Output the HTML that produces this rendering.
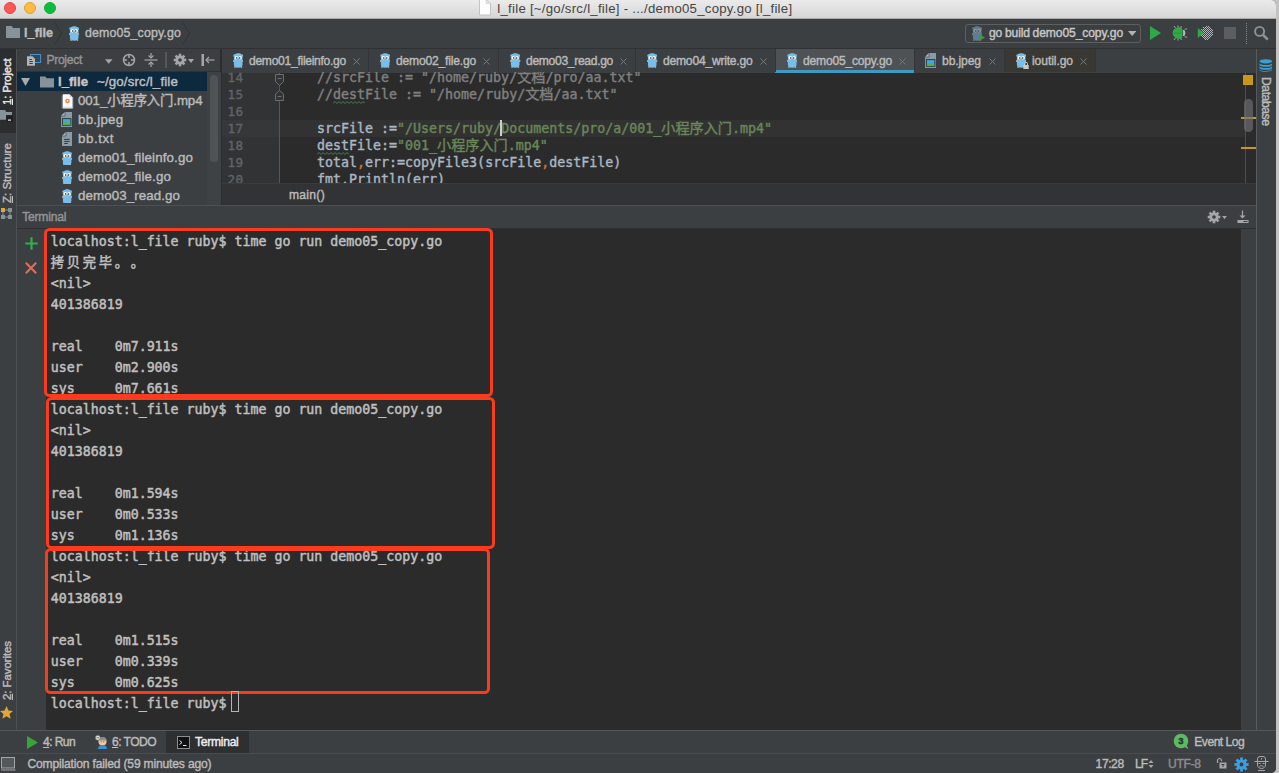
<!DOCTYPE html>
<html lang="zh">
<head>
<meta charset="utf-8">
<title>l_file - demo05_copy.go</title>
<style>
*{box-sizing:border-box;margin:0;padding:0}
html,body{width:1279px;height:773px;overflow:hidden;background:#c2c2c2}
body{font-family:"Liberation Sans","Noto Sans CJK SC",sans-serif;font-size:13px;color:#bbbbbb;position:relative}
.abs{position:absolute}
#win{position:absolute;left:0;top:0;width:1276px;height:773px;background:#3c3f41;border-radius:0 5px 5px 0;overflow:hidden}
.t{position:absolute;white-space:pre;line-height:16px;-webkit-text-stroke:0.4px currentColor}
.mono{font-family:"DejaVu Sans Mono","Liberation Mono","Noto Sans CJK SC",monospace}
.hl{position:absolute;height:1px}
.vl{position:absolute;width:1px}
.tl{position:absolute;top:2px;width:12px;height:12px;border-radius:50%}
u{text-decoration:underline;text-underline-offset:1px;text-decoration-thickness:1px}
</style>
</head>
<body>
<div id="win">
<!-- TITLE BAR -->
<div class="abs" style="left:0;top:0;width:1276px;height:19px;background:linear-gradient(#ebebeb,#d6d6d6);border-bottom:1px solid #a9a9a9"></div>
<div class="tl" style="left:4px;background:#fc5753;border:0.5px solid #df4744"></div>
<div class="tl" style="left:24px;background:#fdbc40;border:0.5px solid #de9f34"></div>
<div class="tl" style="left:44px;background:#0bbd3f;border:0.5px solid #1aab29"></div>
<svg class="abs" style="left:479px;top:0" width="12" height="16" viewBox="0 0 12 16"><path d="M0.500 -1h6.500l4.500 4.500v11.500h-11z" fill="#fefefe" stroke="#b9b9b9" stroke-width="0.800"/><path d="M7 -1v4.500h4.500z" fill="#e4e4e4" stroke="#c4c4c4" stroke-width="0.500"/></svg>
<div class="t" style="left:497.3px;top:0.5px;font-size:13.2px;color:#444444;line-height:16px;letter-spacing:0.262px;-webkit-text-stroke:0;">l_file [~/go/src/l_file] - .../demo05_copy.go [l_file]</div>
<!-- NAV BAR -->
<svg class="abs" style="left:6px;top:26px" width="15" height="12" viewBox="0 0 15 12"><path d="M0 0h5.6l1.6 2H14v10H0z" fill="#87939a"/></svg>
<div class="t" style="left:24px;top:25px;font-size:12.6px;color:#bbbbbb;line-height:16px;font-weight:bold;letter-spacing:0.083px;">l_file</div><svg class="abs" style="left:54px;top:22px" width="9" height="23" viewBox="0 0 9 23"><path d="M0.5 0.5L7.5 11.5L0.5 22.5" fill="none" stroke="#2e3032" stroke-width="0.8"/></svg>
<svg class="abs" style="left:68.800px;top:26px" width="10.400" height="15" viewBox="0 0 10.400 15"><g><circle cx="1.700" cy="2.700" r="1.400" fill="#77beea"/><circle cx="8.700" cy="2.700" r="1.400" fill="#77beea"/><ellipse cx="0.700" cy="8" rx="0.750" ry="0.900" fill="#e0b48e"/><ellipse cx="9.700" cy="8" rx="0.750" ry="0.900" fill="#e0b48e"/><ellipse cx="2" cy="14.100" rx="0.900" ry="0.800" fill="#e0b48e"/><ellipse cx="8.400" cy="14.100" rx="0.900" ry="0.800" fill="#e0b48e"/><path d="M0.900 5C0.900 1.600 2.800 0.300 5.200 0.300S9.500 1.600 9.500 5V11.500C9.500 13.900 7.700 14.700 5.200 14.700S0.900 13.900 0.900 11.500z" fill="#77beea"/><circle cx="3.300" cy="4.800" r="1.750" fill="#fff"/><circle cx="7.100" cy="4.800" r="1.750" fill="#fff"/><circle cx="3.700" cy="5" r="0.800" fill="#1d1d1d"/><circle cx="6.700" cy="5" r="0.800" fill="#1d1d1d"/><ellipse cx="5.200" cy="6.400" rx="0.900" ry="0.600" fill="#d9b595"/><ellipse cx="5.200" cy="6" rx="0.550" ry="0.350" fill="#3a2f2a"/></g></svg>
<div class="t" style="left:85px;top:25px;font-size:12.4px;color:#bbbbbb;line-height:16px;letter-spacing:0.132px;">demo05_copy.go</div><svg class="abs" style="left:182px;top:22px" width="9" height="23" viewBox="0 0 9 23"><path d="M0.5 0.5L7.5 11.5L0.5 22.5" fill="none" stroke="#2e3032" stroke-width="0.8"/></svg>
<div class="abs" style="left:965px;top:24px;width:176px;height:19px;border:1px solid #5e6060;border-radius:3px;background:#3c3f41"></div>
<svg class="abs" style="left:972px;top:26px;opacity:.5" width="10.400" height="15" viewBox="0 0 10.400 15"><g><circle cx="1.700" cy="2.700" r="1.400" fill="#77beea"/><circle cx="8.700" cy="2.700" r="1.400" fill="#77beea"/><ellipse cx="0.700" cy="8" rx="0.750" ry="0.900" fill="#e0b48e"/><ellipse cx="9.700" cy="8" rx="0.750" ry="0.900" fill="#e0b48e"/><ellipse cx="2" cy="14.100" rx="0.900" ry="0.800" fill="#e0b48e"/><ellipse cx="8.400" cy="14.100" rx="0.900" ry="0.800" fill="#e0b48e"/><path d="M0.900 5C0.900 1.600 2.800 0.300 5.200 0.300S9.500 1.600 9.500 5V11.500C9.500 13.900 7.700 14.700 5.200 14.700S0.900 13.900 0.900 11.500z" fill="#77beea"/><circle cx="3.300" cy="4.800" r="1.750" fill="#fff"/><circle cx="7.100" cy="4.800" r="1.750" fill="#fff"/><circle cx="3.700" cy="5" r="0.800" fill="#1d1d1d"/><circle cx="6.700" cy="5" r="0.800" fill="#1d1d1d"/><ellipse cx="5.200" cy="6.400" rx="0.900" ry="0.600" fill="#d9b595"/><ellipse cx="5.200" cy="6" rx="0.550" ry="0.350" fill="#3a2f2a"/></g></svg>
<svg class="abs" style="left:979px;top:34px" width="6" height="7" viewBox="0 0 6 7"><path d="M0 0L6 3.5L0 7z" fill="#3a9a3e"/></svg>
<div class="t" style="left:989px;top:24.9px;font-size:12.1px;color:#c8c8c8;line-height:16px;letter-spacing:-0.105px;word-spacing:-0.6px;">go build demo05_copy.go</div><svg class="abs" style="left:1127.500px;top:31.300px" width="8.400" height="5" viewBox="0 0 10 6"><path d="M0 0h10L5 6z" fill="#b4b4b4"/></svg>
<svg class="abs" style="left:1149.800px;top:26px" width="11" height="14" viewBox="0 0 11 14"><path d="M0 0L11 7L0 14z" fill="#2fa947"/></svg>
<svg class="abs" style="left:1170px;top:25px" width="18" height="16" viewBox="0 0 18 16">
  <g stroke="#a4a7a9" stroke-width="1" fill="none"><path d="M4 1l1.500 2M8 0.500v2.500M11.500 1l-1 2M4 15l1.500-2M8 15.500v-2.500M11.500 15l-1-2"/><path d="M14 5.500c1-1.500 2-1.800 3.200-1.800M14 10.500c1 1.500 2 1.800 3.200 1.800"/></g>
  <ellipse cx="13" cy="8" rx="2.300" ry="3" fill="#b9bcbe"/>
  <path d="M12.500 3.500A5.500 5.500 0 1 0 12.500 12.500A7 7 0 0 1 12.500 3.500z" fill="#2fa947"/>
  <circle cx="8" cy="8" r="5.400" fill="#2fa947"/>
  <path d="M13.200 4.200A6.500 6.500 0 0 0 13.200 11.800A9 9 0 0 1 13.200 4.200z" fill="#3c3f41"/>
  <path d="M2.800 8h8" stroke="#278f3c" stroke-width="0.800"/>
</svg>
<svg class="abs" style="left:1197px;top:25px" width="17" height="16" viewBox="0 0 17 16">
  <path d="M9 1.5H12M6 2.5H13M7 3.5H14M4 4.5H15M5 5.5H16M4 6.5H16M5 7.5H16M4 8.5H16M5 9.5H16M4 10.5H16M5 11.5H15M6 12.5H14M7 13.5H13M8 14.5H12" fill="none" stroke="#b4b7b9" stroke-width="1" stroke-dasharray="1 1"/>
  <path d="M0.800 3L6.800 8L0.800 13z" fill="#2fa947"/>
</svg>
<div class="abs" style="left:1224px;top:27px;width:12px;height:12px;background:#5b5d5e"></div>
<div class="abs" style="left:1246px;top:23px;width:1px;height:22px;background:repeating-linear-gradient(#85888a 0 1px,transparent 1px 2px)"></div>
<svg class="abs" style="left:1253px;top:25px" width="17" height="17" viewBox="0 0 17 17"><circle cx="6.600" cy="6.400" r="4.500" fill="none" stroke="#909294" stroke-width="1.900"/><path d="M10 9.800l4.800 4.800" stroke="#909294" stroke-width="2.600"/></svg>
<div class="hl" style="left:0;top:48px;width:1276px;background:#2f3133"></div>
<!-- LEFT STRIP -->
<div class="abs" style="left:0;top:49px;width:16px;height:682px;background:#3c3f41"></div>
<div class="abs" style="left:0;top:49px;width:16px;height:83.500px;background:#2b2d2e"></div>
<div class="vl" style="left:16px;top:49px;height:682px;background:#4d5052"></div>
<div class="abs" style="left:-1.3px;top:105px;width:46.5px;height:16px;transform-origin:0 0;transform:rotate(-90deg)"><div class="t" style="left:0px;top:0px;font-size:11.5px;color:#e6e6e6;line-height:16px;letter-spacing:-0.208px;"><u>1</u>: Project</div></div>
<svg class="abs" style="left:0;top:109px" width="14" height="14" viewBox="0 0 14 14"><path d="M0 1h5l1.200 2h5.800v3h-6v4.700h-6z" fill="#87939a"/><rect x="6.500" y="6.500" width="6.500" height="6.500" fill="#1f2021"/><rect x="8" y="10.500" width="3" height="1.200" fill="#f0f0f0"/></svg>
<div class="abs" style="left:-1.3px;top:203px;width:60px;height:16px;transform-origin:0 0;transform:rotate(-90deg)"><div class="t" style="left:0px;top:0px;font-size:11.5px;color:#bbbbbb;line-height:16px;letter-spacing:-0.007px;"><u>Z</u>: Structure</div></div>
<svg class="abs" style="left:1px;top:208px" width="12" height="12" viewBox="0 0 12 12"><rect x="0" y="0" width="4" height="4" fill="#e2a53a"/><rect x="0" y="7" width="4" height="4" fill="#87939a"/><rect x="7" y="0" width="4" height="4" fill="#87939a"/><rect x="7" y="7" width="4" height="4" fill="#87939a"/><path d="M4 2h3M2 4v3M9 4v3M4 9h3" stroke="#87939a" stroke-width="1"/></svg>
<div class="abs" style="left:-1.3px;top:700px;width:59px;height:16px;transform-origin:0 0;transform:rotate(-90deg)"><div class="t" style="left:0px;top:0px;font-size:11.5px;color:#bbbbbb;line-height:16px;letter-spacing:-0.090px;"><u>2</u>: Favorites</div></div>
<svg class="abs" style="left:0;top:705.500px" width="13" height="13" viewBox="0 0 12 12"><path d="M6 0l1.8 4.1 4.2.4-3.2 2.9 1 4.3L6 9.4 2.200 11.700l1-4.300L0 4.500l4.200-.4z" fill="#e2a53a"/></svg>
<!-- PROJECT PANEL -->
<div class="abs" style="left:17px;top:49px;width:204px;height:22px;background:#3c3f41"></div>
<div class="hl" style="left:17px;top:71px;width:204px;background:#2f3133"></div>
<div class="vl" style="left:220px;top:49px;height:157px;background:#2b2d2e;width:2px"></div>
<svg class="abs" style="left:27px;top:53px" width="15" height="14" viewBox="0 0 15 14">
  <rect x="3.600" y="1.500" width="10" height="8" fill="#31495c" stroke="#4a94cc" stroke-width="1"/>
  <path d="M0 3.300h5.500l2.500 2.500v7h-8z" fill="#b3b5b7"/><path d="M2.300 6.500h2.500M2.300 8.500h3.500M2.300 10.500h3.500" stroke="#3c3f41" stroke-width="1"/>
</svg>
<div class="t" style="left:46.4px;top:52px;font-size:12.1px;color:#939597;line-height:16px;letter-spacing:-0.292px;">Project</div><svg class="abs" style="left:105px;top:58.500px" width="7.500" height="5" viewBox="0 0 8 5"><path d="M0 0h8L4 5z" fill="#a4a6a8"/></svg>
<svg class="abs" style="left:122px;top:53px" width="14" height="14" viewBox="0 0 14 14"><circle cx="7" cy="7" r="5.500" fill="none" stroke="#a4a6a8" stroke-width="1.500"/><path d="M7 1.500v3.500M7 9v3.500M1.500 7h3.500M9 7h3.500" stroke="#a4a6a8" stroke-width="1.500"/></svg>
<svg class="abs" style="left:144px;top:53px" width="14" height="14" viewBox="0 0 14 14"><path d="M0.500 7h13" stroke="#a4a6a8" stroke-width="1.200"/><path d="M7 0v4.500M7 14v-4.500" stroke="#a4a6a8" stroke-width="1.200"/><path d="M4.500 2.500L7 5l2.500-2.500M4.500 11.500L7 9l2.500 2.500" fill="none" stroke="#a4a6a8" stroke-width="1.100"/></svg>
<div class="abs" style="left:165px;top:52px;width:2px;height:16px;background:#55585a"></div>
<svg class="abs" style="left:173px;top:53px" width="14" height="14" viewBox="-7 -7 14 14"><g><g fill="#a4a6a8"><rect x="-1.3" y="-6.3" width="2.6" height="12.6"/><rect x="-1.3" y="-6.3" width="2.6" height="12.6" transform="rotate(45)"/><rect x="-1.3" y="-6.3" width="2.6" height="12.6" transform="rotate(90)"/><rect x="-1.3" y="-6.3" width="2.6" height="12.6" transform="rotate(135)"/><circle r="4.5"/></g></g><circle r="1.800" fill="#3c3f41"/></svg>
<svg class="abs" style="left:188px;top:59px" width="6" height="4" viewBox="0 0 6 4"><path d="M0 0h6L3 4z" fill="#a4a6a8"/></svg>
<svg class="abs" style="left:201px;top:54px" width="14" height="12" viewBox="0 0 14 12"><rect x="0.500" y="0" width="2.500" height="12" fill="#a4a6a8"/><path d="M5 6h8.500" stroke="#a4a6a8" stroke-width="1.200"/><path d="M8 3L5 6l3 3" fill="none" stroke="#a4a6a8" stroke-width="1.200"/></svg>
<div class="abs" style="left:17px;top:72px;width:190px;height:19px;background:#0d293e"></div>
<svg class="abs" style="left:20.500px;top:76.500px" width="9.500" height="9.500" viewBox="0 0 10 10"><path d="M0 1h9.500L4.750 9.500z" fill="#a9abad"/></svg>
<svg class="abs" style="left:40px;top:75.500px" width="14" height="12" viewBox="0 0 15 12"><path d="M0 0h5.600l1.600 2H15v10H0z" fill="#87939a"/></svg>
<div class="t" style="left:58px;top:73.5px;font-size:13.2px;color:#c8c8c8;line-height:16px;font-weight:bold;letter-spacing:-0.010px;">l_file</div><div class="t" style="left:97px;top:73.5px;font-size:13.3px;color:#c0c0c0;line-height:16px;letter-spacing:0.152px;">~/go/src/l_file</div><svg class="abs" style="left:61px;top:93.7px" width="13" height="15" viewBox="0 0 13 15"><path d="M0.500 1.500h1.500v13h-1.500zM11 3.500h1.500v11h-1.500z" fill="#6d7173"/><path d="M1.800 0.300h6.700l3 3v11.200h-9.700z" fill="#fbfbfb"/><path d="M8.500 0.300v3h3z" fill="#d4d4d4"/><circle cx="6.500" cy="7" r="2.300" fill="#e98b3f"/><circle cx="6.500" cy="6.800" r="0.900" fill="#fde6cf"/><path d="M5.600 8.500l0.900 1 0.900-1z" fill="#e98b3f"/><path d="M1.800 13.200h9.700" stroke="#d0d0d0" stroke-width="0.800"/></svg>
<div class="t" style="left:78px;top:92.5px;font-size:13.3px;color:#bbbbbb;line-height:16px;letter-spacing:-0.088px;">001_小程序入门.mp4</div>
<svg class="abs" style="left:61px;top:112.1px" width="11" height="15" viewBox="0 0 11 15"><path d="M4 0h7v15h-11v-11z" fill="#8a9ba6"/><path d="M0 4h4v-4z" fill="#a9b5bd"/><path d="M0 4h4v-4" fill="none" stroke="#3c3f41" stroke-width="0.600"/><rect x="1.400" y="6.600" width="8.500" height="6.700" fill="#40a8de" stroke="#2c3b45" stroke-width="1"/><path d="M1.900 12.800v-1.600l2.400-1.700 2 1 1.400-.6 1.700 1.500v1.400z" fill="#5cb04a"/></svg>
<div class="t" style="left:78px;top:111.5px;font-size:13.3px;color:#bbbbbb;line-height:16px;letter-spacing:0.239px;">bb.jpeg</div>
<svg class="abs" style="left:62px;top:131.7px" width="10" height="14" viewBox="0 0 10 14"><path d="M4 0h6v14h-10v-10z" fill="#8a9ba6"/><path d="M0 4h4v-4z" fill="#a9b5bd"/><path d="M0 4h4v-4" fill="none" stroke="#3c3f41" stroke-width="0.600"/><path d="M2.200 7.400h5.500M2.200 9.400h5.500M2.200 11.500h3.600" stroke="#33393d" stroke-width="1"/></svg>
<div class="t" style="left:78px;top:130.5px;font-size:13.3px;color:#bbbbbb;line-height:16px;letter-spacing:0.578px;">bb.txt</div>
<svg class="abs" style="left:61.900px;top:150.5px" width="10.300" height="14.800" viewBox="0 0 10.400 15"><g><circle cx="1.700" cy="2.700" r="1.400" fill="#77beea"/><circle cx="8.700" cy="2.700" r="1.400" fill="#77beea"/><ellipse cx="0.700" cy="8" rx="0.750" ry="0.900" fill="#e0b48e"/><ellipse cx="9.700" cy="8" rx="0.750" ry="0.900" fill="#e0b48e"/><ellipse cx="2" cy="14.100" rx="0.900" ry="0.800" fill="#e0b48e"/><ellipse cx="8.400" cy="14.100" rx="0.900" ry="0.800" fill="#e0b48e"/><path d="M0.900 5C0.900 1.600 2.800 0.300 5.200 0.300S9.500 1.600 9.500 5V11.500C9.500 13.900 7.700 14.700 5.200 14.700S0.900 13.900 0.900 11.500z" fill="#77beea"/><circle cx="3.300" cy="4.800" r="1.750" fill="#fff"/><circle cx="7.100" cy="4.800" r="1.750" fill="#fff"/><circle cx="3.700" cy="5" r="0.800" fill="#1d1d1d"/><circle cx="6.700" cy="5" r="0.800" fill="#1d1d1d"/><ellipse cx="5.200" cy="6.400" rx="0.900" ry="0.600" fill="#d9b595"/><ellipse cx="5.200" cy="6" rx="0.550" ry="0.350" fill="#3a2f2a"/></g></svg>
<div class="t" style="left:78px;top:149.5px;font-size:13.3px;color:#bbbbbb;line-height:16px;letter-spacing:0.146px;">demo01_fileinfo.go</div>
<svg class="abs" style="left:61.900px;top:169.5px" width="10.300" height="14.800" viewBox="0 0 10.400 15"><g><circle cx="1.700" cy="2.700" r="1.400" fill="#77beea"/><circle cx="8.700" cy="2.700" r="1.400" fill="#77beea"/><ellipse cx="0.700" cy="8" rx="0.750" ry="0.900" fill="#e0b48e"/><ellipse cx="9.700" cy="8" rx="0.750" ry="0.900" fill="#e0b48e"/><ellipse cx="2" cy="14.100" rx="0.900" ry="0.800" fill="#e0b48e"/><ellipse cx="8.400" cy="14.100" rx="0.900" ry="0.800" fill="#e0b48e"/><path d="M0.900 5C0.900 1.600 2.800 0.300 5.200 0.300S9.500 1.600 9.500 5V11.500C9.500 13.900 7.700 14.700 5.200 14.700S0.900 13.900 0.900 11.500z" fill="#77beea"/><circle cx="3.300" cy="4.800" r="1.750" fill="#fff"/><circle cx="7.100" cy="4.800" r="1.750" fill="#fff"/><circle cx="3.700" cy="5" r="0.800" fill="#1d1d1d"/><circle cx="6.700" cy="5" r="0.800" fill="#1d1d1d"/><ellipse cx="5.200" cy="6.400" rx="0.900" ry="0.600" fill="#d9b595"/><ellipse cx="5.200" cy="6" rx="0.550" ry="0.350" fill="#3a2f2a"/></g></svg>
<div class="t" style="left:78px;top:168.5px;font-size:13.3px;color:#bbbbbb;line-height:16px;letter-spacing:0.147px;">demo02_file.go</div>
<svg class="abs" style="left:61.900px;top:188.5px" width="10.300" height="14.800" viewBox="0 0 10.400 15"><g><circle cx="1.700" cy="2.700" r="1.400" fill="#77beea"/><circle cx="8.700" cy="2.700" r="1.400" fill="#77beea"/><ellipse cx="0.700" cy="8" rx="0.750" ry="0.900" fill="#e0b48e"/><ellipse cx="9.700" cy="8" rx="0.750" ry="0.900" fill="#e0b48e"/><ellipse cx="2" cy="14.100" rx="0.900" ry="0.800" fill="#e0b48e"/><ellipse cx="8.400" cy="14.100" rx="0.900" ry="0.800" fill="#e0b48e"/><path d="M0.900 5C0.900 1.600 2.800 0.300 5.200 0.300S9.500 1.600 9.500 5V11.500C9.500 13.900 7.700 14.700 5.200 14.700S0.900 13.900 0.900 11.500z" fill="#77beea"/><circle cx="3.300" cy="4.800" r="1.750" fill="#fff"/><circle cx="7.100" cy="4.800" r="1.750" fill="#fff"/><circle cx="3.700" cy="5" r="0.800" fill="#1d1d1d"/><circle cx="6.700" cy="5" r="0.800" fill="#1d1d1d"/><ellipse cx="5.200" cy="6.400" rx="0.900" ry="0.600" fill="#d9b595"/><ellipse cx="5.200" cy="6" rx="0.550" ry="0.350" fill="#3a2f2a"/></g></svg>
<div class="t" style="left:78px;top:187.5px;font-size:13.3px;color:#bbbbbb;line-height:16px;letter-spacing:0.104px;">demo03_read.go</div>
<div class="abs" style="left:207px;top:72px;width:13.500px;height:133px;background:#3f4244"></div>
<div class="abs" style="left:210px;top:75px;width:8px;height:87px;border-radius:4px;background:#505354"></div>
<div class="abs" style="left:17px;top:205px;width:1239px;height:1px;background:#4e5153"></div>
<!-- EDITOR TABS -->
<div class="abs" style="left:222px;top:49px;width:1034px;height:24px;background:#3c3f41"></div>
<div class="abs" style="left:775px;top:49px;width:139px;height:23px;background:#4e5254"></div>
<div class="abs" style="left:775px;top:69.500px;width:139px;height:3px;background:#3d9bc3"></div>
<div class="abs" style="left:1005px;top:49px;width:90px;height:23px;background:#3a3832"></div>
<div class="vl" style="left:368px;top:49px;height:23px;background:#323537"></div>
<div class="vl" style="left:498px;top:49px;height:23px;background:#323537"></div>
<div class="vl" style="left:635px;top:49px;height:23px;background:#323537"></div>
<div class="vl" style="left:775px;top:49px;height:23px;background:#323537"></div>
<div class="vl" style="left:914px;top:49px;height:23px;background:#323537"></div>
<div class="vl" style="left:1004px;top:49px;height:23px;background:#323537"></div>
<div class="vl" style="left:1095px;top:49px;height:23px;background:#323537"></div>
<svg class="abs" style="left:232.7px;top:53.400px" width="10.400" height="15" viewBox="0 0 10.400 15"><g><circle cx="1.700" cy="2.700" r="1.400" fill="#77beea"/><circle cx="8.700" cy="2.700" r="1.400" fill="#77beea"/><ellipse cx="0.700" cy="8" rx="0.750" ry="0.900" fill="#e0b48e"/><ellipse cx="9.700" cy="8" rx="0.750" ry="0.900" fill="#e0b48e"/><ellipse cx="2" cy="14.100" rx="0.900" ry="0.800" fill="#e0b48e"/><ellipse cx="8.400" cy="14.100" rx="0.900" ry="0.800" fill="#e0b48e"/><path d="M0.900 5C0.900 1.600 2.800 0.300 5.200 0.300S9.500 1.600 9.500 5V11.500C9.500 13.900 7.700 14.700 5.200 14.700S0.900 13.900 0.900 11.500z" fill="#77beea"/><circle cx="3.300" cy="4.800" r="1.750" fill="#fff"/><circle cx="7.100" cy="4.800" r="1.750" fill="#fff"/><circle cx="3.700" cy="5" r="0.800" fill="#1d1d1d"/><circle cx="6.700" cy="5" r="0.800" fill="#1d1d1d"/><ellipse cx="5.200" cy="6.400" rx="0.900" ry="0.600" fill="#d9b595"/><ellipse cx="5.200" cy="6" rx="0.550" ry="0.350" fill="#3a2f2a"/></g></svg>
<div class="t" style="left:249px;top:53px;font-size:12.1px;color:#bbbbbb;line-height:16px;letter-spacing:-0.289px;">demo01_fileinfo.go</div><svg class="abs" style="left:353.2px;top:58px" width="7" height="7" viewBox="0 0 8 8"><g><path d="M0.5 0.5l7 7M7.5 0.5l-7 7" stroke="#787b7d" stroke-width="1.1" fill="none"/></g></svg>
<svg class="abs" style="left:379.6px;top:53.400px" width="10.400" height="15" viewBox="0 0 10.400 15"><g><circle cx="1.700" cy="2.700" r="1.400" fill="#77beea"/><circle cx="8.700" cy="2.700" r="1.400" fill="#77beea"/><ellipse cx="0.700" cy="8" rx="0.750" ry="0.900" fill="#e0b48e"/><ellipse cx="9.700" cy="8" rx="0.750" ry="0.900" fill="#e0b48e"/><ellipse cx="2" cy="14.100" rx="0.900" ry="0.800" fill="#e0b48e"/><ellipse cx="8.400" cy="14.100" rx="0.900" ry="0.800" fill="#e0b48e"/><path d="M0.900 5C0.900 1.600 2.800 0.300 5.200 0.300S9.500 1.600 9.500 5V11.500C9.500 13.900 7.700 14.700 5.200 14.700S0.900 13.900 0.900 11.500z" fill="#77beea"/><circle cx="3.300" cy="4.800" r="1.750" fill="#fff"/><circle cx="7.100" cy="4.800" r="1.750" fill="#fff"/><circle cx="3.700" cy="5" r="0.800" fill="#1d1d1d"/><circle cx="6.700" cy="5" r="0.800" fill="#1d1d1d"/><ellipse cx="5.200" cy="6.400" rx="0.900" ry="0.600" fill="#d9b595"/><ellipse cx="5.200" cy="6" rx="0.550" ry="0.350" fill="#3a2f2a"/></g></svg>
<div class="t" style="left:396px;top:53px;font-size:12.1px;color:#bbbbbb;line-height:16px;letter-spacing:-0.193px;">demo02_file.go</div><svg class="abs" style="left:483.2px;top:58px" width="7" height="7" viewBox="0 0 8 8"><g><path d="M0.5 0.5l7 7M7.5 0.5l-7 7" stroke="#787b7d" stroke-width="1.1" fill="none"/></g></svg>
<svg class="abs" style="left:510.2px;top:53.400px" width="10.400" height="15" viewBox="0 0 10.400 15"><g><circle cx="1.700" cy="2.700" r="1.400" fill="#77beea"/><circle cx="8.700" cy="2.700" r="1.400" fill="#77beea"/><ellipse cx="0.700" cy="8" rx="0.750" ry="0.900" fill="#e0b48e"/><ellipse cx="9.700" cy="8" rx="0.750" ry="0.900" fill="#e0b48e"/><ellipse cx="2" cy="14.100" rx="0.900" ry="0.800" fill="#e0b48e"/><ellipse cx="8.400" cy="14.100" rx="0.900" ry="0.800" fill="#e0b48e"/><path d="M0.900 5C0.900 1.600 2.800 0.300 5.200 0.300S9.500 1.600 9.500 5V11.500C9.500 13.900 7.700 14.700 5.200 14.700S0.900 13.900 0.900 11.500z" fill="#77beea"/><circle cx="3.300" cy="4.800" r="1.750" fill="#fff"/><circle cx="7.100" cy="4.800" r="1.750" fill="#fff"/><circle cx="3.700" cy="5" r="0.800" fill="#1d1d1d"/><circle cx="6.700" cy="5" r="0.800" fill="#1d1d1d"/><ellipse cx="5.200" cy="6.400" rx="0.900" ry="0.600" fill="#d9b595"/><ellipse cx="5.200" cy="6" rx="0.550" ry="0.350" fill="#3a2f2a"/></g></svg>
<div class="t" style="left:526px;top:53px;font-size:12.1px;color:#bbbbbb;line-height:16px;letter-spacing:-0.318px;">demo03_read.go</div><svg class="abs" style="left:619.7px;top:58px" width="7" height="7" viewBox="0 0 8 8"><g><path d="M0.5 0.5l7 7M7.5 0.5l-7 7" stroke="#787b7d" stroke-width="1.1" fill="none"/></g></svg>
<svg class="abs" style="left:647.2px;top:53.400px" width="10.400" height="15" viewBox="0 0 10.400 15"><g><circle cx="1.700" cy="2.700" r="1.400" fill="#77beea"/><circle cx="8.700" cy="2.700" r="1.400" fill="#77beea"/><ellipse cx="0.700" cy="8" rx="0.750" ry="0.900" fill="#e0b48e"/><ellipse cx="9.700" cy="8" rx="0.750" ry="0.900" fill="#e0b48e"/><ellipse cx="2" cy="14.100" rx="0.900" ry="0.800" fill="#e0b48e"/><ellipse cx="8.400" cy="14.100" rx="0.900" ry="0.800" fill="#e0b48e"/><path d="M0.900 5C0.900 1.600 2.800 0.300 5.200 0.300S9.500 1.600 9.500 5V11.500C9.500 13.900 7.700 14.700 5.200 14.700S0.900 13.900 0.900 11.500z" fill="#77beea"/><circle cx="3.300" cy="4.800" r="1.750" fill="#fff"/><circle cx="7.100" cy="4.800" r="1.750" fill="#fff"/><circle cx="3.700" cy="5" r="0.800" fill="#1d1d1d"/><circle cx="6.700" cy="5" r="0.800" fill="#1d1d1d"/><ellipse cx="5.200" cy="6.400" rx="0.900" ry="0.600" fill="#d9b595"/><ellipse cx="5.200" cy="6" rx="0.550" ry="0.350" fill="#3a2f2a"/></g></svg>
<div class="t" style="left:663px;top:53px;font-size:12.1px;color:#bbbbbb;line-height:16px;letter-spacing:-0.219px;">demo04_write.go</div><svg class="abs" style="left:759.7px;top:58px" width="7" height="7" viewBox="0 0 8 8"><g><path d="M0.5 0.5l7 7M7.5 0.5l-7 7" stroke="#787b7d" stroke-width="1.1" fill="none"/></g></svg>
<svg class="abs" style="left:787.1px;top:53.400px" width="10.400" height="15" viewBox="0 0 10.400 15"><g><circle cx="1.700" cy="2.700" r="1.400" fill="#77beea"/><circle cx="8.700" cy="2.700" r="1.400" fill="#77beea"/><ellipse cx="0.700" cy="8" rx="0.750" ry="0.900" fill="#e0b48e"/><ellipse cx="9.700" cy="8" rx="0.750" ry="0.900" fill="#e0b48e"/><ellipse cx="2" cy="14.100" rx="0.900" ry="0.800" fill="#e0b48e"/><ellipse cx="8.400" cy="14.100" rx="0.900" ry="0.800" fill="#e0b48e"/><path d="M0.900 5C0.900 1.600 2.800 0.300 5.200 0.300S9.500 1.600 9.500 5V11.500C9.500 13.900 7.700 14.700 5.200 14.700S0.900 13.900 0.900 11.500z" fill="#77beea"/><circle cx="3.300" cy="4.800" r="1.750" fill="#fff"/><circle cx="7.100" cy="4.800" r="1.750" fill="#fff"/><circle cx="3.700" cy="5" r="0.800" fill="#1d1d1d"/><circle cx="6.700" cy="5" r="0.800" fill="#1d1d1d"/><ellipse cx="5.200" cy="6.400" rx="0.900" ry="0.600" fill="#d9b595"/><ellipse cx="5.200" cy="6" rx="0.550" ry="0.350" fill="#3a2f2a"/></g></svg>
<div class="t" style="left:803px;top:53px;font-size:12.1px;color:#bbbbbb;line-height:16px;letter-spacing:-0.206px;">demo05_copy.go</div><svg class="abs" style="left:898.7px;top:58px" width="7" height="7" viewBox="0 0 8 8"><g><path d="M0.5 0.5l7 7M7.5 0.5l-7 7" stroke="#787b7d" stroke-width="1.1" fill="none"/></g></svg>
<svg class="abs" style="left:924.5px;top:52.900px" width="11" height="15" viewBox="0 0 11 15"><path d="M4 0h7v15h-11v-11z" fill="#8a9ba6"/><path d="M0 4h4v-4z" fill="#a9b5bd"/><path d="M0 4h4v-4" fill="none" stroke="#3c3f41" stroke-width="0.600"/><rect x="1.400" y="6.600" width="8.500" height="6.700" fill="#40a8de" stroke="#2c3b45" stroke-width="1"/><path d="M1.900 12.800v-1.600l2.400-1.700 2 1 1.400-.6 1.700 1.500v1.400z" fill="#5cb04a"/></svg>
<div class="t" style="left:942px;top:53px;font-size:12.1px;color:#bbbbbb;line-height:16px;letter-spacing:-0.098px;">bb.jpeg</div><svg class="abs" style="left:989.2px;top:58px" width="7" height="7" viewBox="0 0 8 8"><g><path d="M0.5 0.5l7 7M7.5 0.5l-7 7" stroke="#787b7d" stroke-width="1.1" fill="none"/></g></svg>
<svg class="abs" style="left:1015.7px;top:53.400px" width="10.400" height="15" viewBox="0 0 10.400 15"><g><circle cx="1.700" cy="2.700" r="1.400" fill="#77beea"/><circle cx="8.700" cy="2.700" r="1.400" fill="#77beea"/><ellipse cx="0.700" cy="8" rx="0.750" ry="0.900" fill="#e0b48e"/><ellipse cx="9.700" cy="8" rx="0.750" ry="0.900" fill="#e0b48e"/><ellipse cx="2" cy="14.100" rx="0.900" ry="0.800" fill="#e0b48e"/><ellipse cx="8.400" cy="14.100" rx="0.900" ry="0.800" fill="#e0b48e"/><path d="M0.900 5C0.900 1.600 2.800 0.300 5.200 0.300S9.500 1.600 9.500 5V11.500C9.500 13.900 7.700 14.700 5.200 14.700S0.900 13.900 0.900 11.500z" fill="#77beea"/><circle cx="3.300" cy="4.800" r="1.750" fill="#fff"/><circle cx="7.100" cy="4.800" r="1.750" fill="#fff"/><circle cx="3.700" cy="5" r="0.800" fill="#1d1d1d"/><circle cx="6.700" cy="5" r="0.800" fill="#1d1d1d"/><ellipse cx="5.200" cy="6.400" rx="0.900" ry="0.600" fill="#d9b595"/><ellipse cx="5.200" cy="6" rx="0.550" ry="0.350" fill="#3a2f2a"/></g></svg>
<svg class="abs" style="left:1022.7px;top:62px" width="6" height="7" viewBox="0 0 6 7"><path d="M1.500 3v-1.200a1.500 1.500 0 0 1 3 0V3" fill="none" stroke="#c9c9c9" stroke-width="1"/><rect x="0.300" y="3" width="5.400" height="4" fill="#c9c9c9"/></svg>
<div class="t" style="left:1032px;top:53px;font-size:12.1px;color:#bbbbbb;line-height:16px;letter-spacing:-0.076px;">ioutil.go</div><svg class="abs" style="left:1079.7px;top:58px" width="7" height="7" viewBox="0 0 8 8"><g><path d="M0.5 0.5l7 7M7.5 0.5l-7 7" stroke="#787b7d" stroke-width="1.1" fill="none"/></g></svg>
<!-- EDITOR -->
<div class="abs" id="editor" style="left:222px;top:72.500px;width:1034px;height:110.500px;background:#2b2b2b;overflow:hidden">
  <div class="abs" style="left:0;top:0;width:58px;height:111px;background:#313335"></div>
  <div class="abs" style="left:0;top:47.700px;width:58px;height:16.600px;background:#353739"></div>
  <div class="abs" style="left:58px;top:47.700px;width:966px;height:16.600px;background:#323232"></div>
  <div class="vl" style="left:57px;top:0;height:111px;background:#555759"></div>
  <svg class="abs" style="left:52px;top:0" width="11" height="30" viewBox="0 0 11 30">
    <path d="M1.500 1.500h8v7L5.500 12.500 1.500 8.500z" fill="#313335" stroke="#6b6e70" stroke-width="1"/><path d="M3.500 5.500h4" stroke="#6b6e70" stroke-width="1"/>
    <path d="M1.500 27.500h8v-6.500L5.500 17.500 1.500 21z" fill="#313335" stroke="#6b6e70" stroke-width="1"/><path d="M3.500 23.500h4" stroke="#6b6e70" stroke-width="1"/>
  </svg>
</div>
<div class="abs" style="left:222px;top:72px;width:1022px;height:111px;overflow:hidden">
<div class="t mono" style="left:5.5px;top:-2.8px;font-size:12.6px;line-height:17px;color:#606366;letter-spacing:0.4px">14</div><div class="t mono" style="left:95px;top:-2.8px;font-size:13.3px;line-height:17px"><span style="color:#808080">//srcFile := "/home/ruby/<span style="font-size:14.130px">文档</span>/pro/aa.txt"</span></div>
<div class="t mono" style="left:5.5px;top:14.2px;font-size:12.6px;line-height:17px;color:#606366;letter-spacing:0.4px">15</div><div class="t mono" style="left:95px;top:14.2px;font-size:13.3px;line-height:17px"><span style="color:#808080">//</span><span style="color:#808080">dest</span><span style="color:#808080">File := "/home/ruby/<span style="font-size:14.130px">文档</span>/aa.txt"</span></div>
<div class="t mono" style="left:5.5px;top:31.2px;font-size:12.6px;line-height:17px;color:#606366;letter-spacing:0.4px">16</div>
<div class="t mono" style="left:5.5px;top:48.2px;font-size:12.6px;line-height:17px;color:#606366;letter-spacing:0.4px">17</div><div class="t mono" style="left:95px;top:48.2px;font-size:13.3px;line-height:17px"><span style="color:#a9b7c6">srcFile :=</span><span style="color:#6a8759">"/Users/ruby/Documents/pro/a/001_<span style="font-size:14.130px">小程序入门</span>.mp4"</span></div>
<div class="t mono" style="left:5.5px;top:65.2px;font-size:12.6px;line-height:17px;color:#606366;letter-spacing:0.4px">18</div><div class="t mono" style="left:95px;top:65.2px;font-size:13.3px;line-height:17px"><span style="color:#a9b7c6">dest</span><span style="color:#a9b7c6">File:=</span><span style="color:#6a8759">"001_<span style="font-size:14.130px">小程序入门</span>.mp4"</span></div>
<div class="t mono" style="left:5.5px;top:82.2px;font-size:12.6px;line-height:17px;color:#606366;letter-spacing:0.4px">19</div><div class="t mono" style="left:95px;top:82.2px;font-size:13.3px;line-height:17px"><span style="color:#a9b7c6">total</span><span style="color:#cc7832">,</span><span style="color:#a9b7c6">err:=copyFile3(srcFile</span><span style="color:#cc7832">,</span><span style="color:#a9b7c6">destFile)</span></div>
<div class="t mono" style="left:5.5px;top:99.2px;font-size:12.6px;line-height:17px;color:#606366;letter-spacing:0.4px">20</div><div class="t mono" style="left:95px;top:99.2px;font-size:13.3px;line-height:17px"><span style="color:#a9b7c6">fmt.Println(err)</span></div>
<svg class="abs" style="left:111px;top:28.5px" width="32" height="3" viewBox="0 0 32 3"><polyline points="0,2.5 2,0.5 4,2.5 6,0.5 8,2.5 10,0.5 12,2.5 14,0.5 16,2.5 18,0.5 20,2.5 22,0.5 24,2.5 26,0.5 28,2.5 30,0.5 32,2.5" fill="none" stroke="#4f8a58" stroke-width="0.9"/></svg>
<svg class="abs" style="left:95px;top:79.5px" width="32" height="3" viewBox="0 0 32 3"><polyline points="0,2.5 2,0.5 4,2.5 6,0.5 8,2.5 10,0.5 12,2.5 14,0.5 16,2.5 18,0.5 20,2.5 22,0.5 24,2.5 26,0.5 28,2.5 30,0.5 32,2.5" fill="none" stroke="#4f8a58" stroke-width="0.9"/></svg>
<div class="abs" style="left:278.400px;top:48px;width:1.600px;height:16px;background:#cfcfcf"></div>
</div>
<div class="vl" style="left:1245px;top:72px;height:111px;background:#4d4f51"></div>
<div class="abs" style="left:1243px;top:75px;width:10px;height:10px;background:#c8981c"></div>
<div class="abs" style="left:1241px;top:117px;width:14.500px;height:2px;background:#c9971e"></div>
<div class="abs" style="left:1241px;top:147px;width:14.500px;height:2px;background:#c9971e"></div>
<div class="abs" style="left:1244px;top:98.500px;width:8.500px;height:33px;border-radius:4.250px;background:rgba(110,112,114,0.650)"></div>
<!-- breadcrumb -->
<div class="abs" style="left:222px;top:183px;width:1034px;height:22px;background:#313335"></div>
<div class="hl" style="left:222px;top:183px;width:1034px;background:#3a3c3e"></div>
<div class="t" style="left:289px;top:186.5px;font-size:12.1px;color:#bbbbbb;line-height:16px;letter-spacing:0.286px;">main()</div><!-- TERMINAL HEADER -->
<div class="abs" style="left:17px;top:206px;width:1239px;height:22px;background:#3c3f41"></div>
<div class="t" style="left:22.2px;top:209px;font-size:12.1px;color:#939597;line-height:16px;letter-spacing:-0.213px;">Terminal</div><svg class="abs" style="left:1207px;top:210px" width="14" height="14" viewBox="-7 -7 14 14"><g><g fill="#a4a6a8"><rect x="-1.3" y="-6.3" width="2.6" height="12.6"/><rect x="-1.3" y="-6.3" width="2.6" height="12.6" transform="rotate(45)"/><rect x="-1.3" y="-6.3" width="2.6" height="12.6" transform="rotate(90)"/><rect x="-1.3" y="-6.3" width="2.6" height="12.6" transform="rotate(135)"/><circle r="4.5"/></g></g><circle r="1.800" fill="#3c3f41"/></svg>
<svg class="abs" style="left:1222.200px;top:216px" width="5" height="3.200" viewBox="0 0 6 4"><path d="M0 0h6L3 4z" fill="#a4a6a8"/></svg>
<svg class="abs" style="left:1236.500px;top:210px" width="12" height="14" viewBox="0 0 12 14"><path d="M5.500 0.500v7" stroke="#a4a6a8" stroke-width="1.200"/><path d="M2.500 5.500L5.500 8.500l3-3z" fill="#a4a6a8"/><rect x="0.500" y="10" width="11" height="3" fill="#a4a6a8"/><rect x="6.500" y="11" width="4" height="1" fill="#3c3f41"/></svg>
<div class="hl" style="left:17px;top:228px;width:1239px;background:#2d2f30"></div>
<!-- TERMINAL BODY -->
<div class="abs" style="left:17px;top:229px;width:29px;height:502px;background:#3c3f41"></div>
<div class="abs" style="left:46px;top:229px;width:1195px;height:502px;background:#2b2b2b"></div>
<div class="abs" style="left:1241px;top:229px;width:15px;height:502px;background:#3c3f41"></div>
<svg class="abs" style="left:24.500px;top:236.500px" width="13" height="13" viewBox="0 0 13 13"><path d="M6.500 0.300v12.400M0.300 6.500h12.400" stroke="#30ae4b" stroke-width="2.200"/></svg>
<svg class="abs" style="left:25px;top:262px" width="12" height="12" viewBox="0 0 12 12"><path d="M0.800 0.800l10.400 10.400M11.200 0.800l-10.400 10.400" stroke="#e26b5a" stroke-width="2.100"/></svg>
<div class="abs mono" style="left:50.800px;top:230.500px;font-size:13.280px;line-height:21px;color:#c0c0c0;white-space:pre;text-spacing-trim:space-all;-webkit-text-stroke:0.45px currentColor"><div style="height:21px">localhost:l_file ruby$ time go run demo05_copy.go</div><div style="height:21px;letter-spacing:2.700px">拷贝完毕。<span style="display:inline-block">。</span></div><div style="height:21px">&lt;nil&gt;</div><div style="height:21px">401386819</div><div style="height:21px"></div><div style="height:21px">real    0m7.911s</div><div style="height:21px">user    0m2.900s</div><div style="height:21px">sys     0m7.661s</div><div style="height:21px">localhost:l_file ruby$ time go run demo05_copy.go</div><div style="height:21px">&lt;nil&gt;</div><div style="height:21px">401386819</div><div style="height:21px"></div><div style="height:21px">real    0m1.594s</div><div style="height:21px">user    0m0.533s</div><div style="height:21px">sys     0m1.136s</div><div style="height:21px">localhost:l_file ruby$ time go run demo05_copy.go</div><div style="height:21px">&lt;nil&gt;</div><div style="height:21px">401386819</div><div style="height:21px"></div><div style="height:21px">real    0m1.515s</div><div style="height:21px">user    0m0.339s</div><div style="height:21px">sys     0m0.625s</div><div style="height:21px">localhost:l_file ruby$ </div></div>
<div class="abs" style="left:43.5px;top:228.2px;width:449.4px;height:168.8px;border:3.100px solid #fb3c1c;border-radius:5.500px"></div>
<div class="abs" style="left:46px;top:397px;width:449.3px;height:152px;border:3.100px solid #fb3c1c;border-radius:5.500px"></div>
<div class="abs" style="left:45px;top:548px;width:445.2px;height:146.2px;border:3.100px solid #fb3c1c;border-radius:5.500px"></div>
<div class="abs" style="left:231px;top:691.200px;width:8.200px;height:21px;border:1px solid #b4b4b4"></div>
<!-- RIGHT STRIP -->
<div class="abs" style="left:1257px;top:49px;width:19px;height:682px;background:#3c3f41"></div>
<div class="abs" style="left:1255.500px;top:49px;width:1.500px;height:682px;background:#585b5d"></div>
<svg class="abs" style="left:1258.500px;top:58.700px" width="13.500" height="13" viewBox="0 0 14 13"><ellipse cx="7" cy="2.200" rx="6.500" ry="2.200" fill="#3b9fd1"/><path d="M0.500 4c0 2.800 13 2.800 13 0v1.800c0 2.800-13 2.800-13 0zM0.500 7c0 2.800 13 2.800 13 0v1.800c0 2.800-13 2.800-13 0zM0.500 10c0 2.800 13 2.800 13 0v0.800c0 2.800-13 2.800-13 0z" fill="#3b9fd1"/></svg>
<div class="abs" style="left:1274px;top:76.500px;width:50px;height:16px;transform-origin:0 0;transform:rotate(90deg)"><div class="t" style="left:0px;top:0px;font-size:12.1px;color:#bbbbbb;line-height:16px;letter-spacing:-0.410px;">Database</div></div>
<!-- BOTTOM TOOL BAR -->
<div class="hl" style="left:0;top:730px;width:1276px;background:#555759"></div>
<div class="abs" style="left:0;top:731px;width:1276px;height:22px;background:#3c3f41"></div>
<div class="abs" style="left:166px;top:731px;width:83px;height:22px;background:#2d2f30"></div>
<svg class="abs" style="left:27px;top:736px" width="11" height="13" viewBox="0 0 11 13"><path d="M0 0L11 6.500L0 13z" fill="#35a53a"/></svg>
<div class="t" style="left:43px;top:734px;font-size:12.1px;color:#bbbbbb;line-height:16px;letter-spacing:-0.607px;"><u>4</u>: Run</div><svg class="abs" style="left:95px;top:735px" width="13" height="14" viewBox="0 0 13 14">
  <circle cx="7.500" cy="6.500" r="4" fill="#f0c9a0"/><path d="M3.500 5.500a4 3.500 0 0 1 8 0z" fill="#8a8d8f"/>
  <path d="M3 14c0-3 2-4 4.500-4s4.500 1 4.500 4z" fill="#3b8fd4"/>
  <circle cx="2.800" cy="2.800" r="2.500" fill="#e8e8e8" stroke="#555" stroke-width="0.600"/><path d="M1.500 2.800h2.600" stroke="#444" stroke-width="0.800"/>
  <circle cx="6.200" cy="6.800" r="0.500" fill="#333"/><circle cx="8.800" cy="6.800" r="0.500" fill="#333"/>
</svg>
<div class="t" style="left:112px;top:734px;font-size:12.1px;color:#bbbbbb;line-height:16px;letter-spacing:-0.565px;"><u>6</u>: TODO</div><svg class="abs" style="left:177px;top:736px" width="13" height="13" viewBox="0 0 13 13"><rect x="0.500" y="0.500" width="12" height="12" fill="#111" stroke="#8d9092" stroke-width="1"/><path d="M2.500 4.500l2.500 2-2.500 2" fill="none" stroke="#e8e8e8" stroke-width="1"/><path d="M6 9.500h3.500" stroke="#e8e8e8" stroke-width="1"/></svg>
<div class="t" style="left:195px;top:734px;font-size:12.1px;color:#f0f0f0;line-height:16px;letter-spacing:-0.275px;">Terminal</div><svg class="abs" style="left:1173px;top:733px" width="17" height="17" viewBox="0 0 17 17"><circle cx="8" cy="8" r="7.300" fill="#5fb865"/><path d="M10 13l5.500 3.200-2.500-5.500z" fill="#5fb865"/></svg>
<div class="t" style="left:1178.3px;top:733.3px;font-size:9.5px;color:#1f3a22;line-height:16px;font-weight:bold;">3</div><div class="t" style="left:1194.3px;top:734px;font-size:12.1px;color:#bbbbbb;line-height:16px;letter-spacing:-0.497px;">Event Log</div><!-- STATUS BAR -->
<div class="hl" style="left:0;top:753px;width:1276px;background:#4a4d4f"></div>
<div class="abs" style="left:0;top:754px;width:1276px;height:19px;background:#3c3f41"></div>
<svg class="abs" style="left:1px;top:757px" width="15" height="14" viewBox="0 0 15 14"><rect x="0.500" y="0.500" width="13" height="10.500" fill="#55585a" stroke="#a4a6a8" stroke-width="1"/><path d="M0 13h14.500" stroke="#a4a6a8" stroke-width="1"/></svg>
<div class="t" style="left:27.4px;top:756px;font-size:12.1px;color:#bbbbbb;line-height:16px;letter-spacing:-0.179px;">Compilation failed (59 minutes ago)</div><div class="t" style="left:1095.6px;top:756px;font-size:12.1px;color:#bbbbbb;line-height:16px;letter-spacing:-0.433px;">17:28</div><div class="t" style="left:1135px;top:756px;font-size:12.1px;color:#bbbbbb;line-height:16px;letter-spacing:-0.862px;">LF</div><svg class="abs" style="left:1148px;top:759px" width="6" height="10" viewBox="0 0 6 10"><path d="M0.500 4L3 1l2.500 3zM0.500 6L3 9l2.500-3z" fill="#a4a6a8"/></svg>
<div class="t" style="left:1168px;top:756px;font-size:12.1px;color:#8c8e90;line-height:16px;letter-spacing:-0.313px;">UTF-8</div><svg class="abs" style="left:1216px;top:757px" width="11" height="12" viewBox="0 0 11 12"><path d="M1.500 6v-2.500a2 2 0 0 1 4 0v0.800" fill="none" stroke="#a4a6a8" stroke-width="1.200"/><rect x="3.500" y="5.500" width="7" height="6" fill="#a4a6a8"/><path d="M5.500 7.500h3M7 7.500v2.500" stroke="#3c3f41" stroke-width="1"/></svg>
<svg class="abs" style="left:1234px;top:756.500px" width="15" height="15" viewBox="-7 -7 14 14"><g fill="#3d9ee0"><rect x="-1.300" y="-6.600" width="2.600" height="13.200"/><rect x="-1.300" y="-6.600" width="2.600" height="13.200" transform="rotate(45)"/><rect x="-1.300" y="-6.600" width="2.600" height="13.200" transform="rotate(90)"/><rect x="-1.300" y="-6.600" width="2.600" height="13.200" transform="rotate(135)"/><circle r="4.700"/></g><circle r="1.800" fill="#3c3f41"/></svg>
<svg class="abs" style="left:1254px;top:756px" width="15" height="15" viewBox="0 0 15 15"><g fill="none" stroke="#a4a6a8" stroke-width="1"><path d="M3.500 5.500v-2.500a2.500 2.500 0 0 1 2.500-2.500h3a2.500 2.500 0 0 1 2.500 2.500v2.500"/><path d="M0.500 5.500h14"/><path d="M3.500 5.500v3.500c0 2 1.800 3.500 4 3.500s4-1.500 4-3.500v-3.500"/><path d="M4.500 7.500h2M8.500 7.500h2M5.500 10.500c1-1 3-1 4 0"/><path d="M7.500 2v1.500"/><path d="M4 14.500h7"/></g></svg>
</div>
</body>
</html>
